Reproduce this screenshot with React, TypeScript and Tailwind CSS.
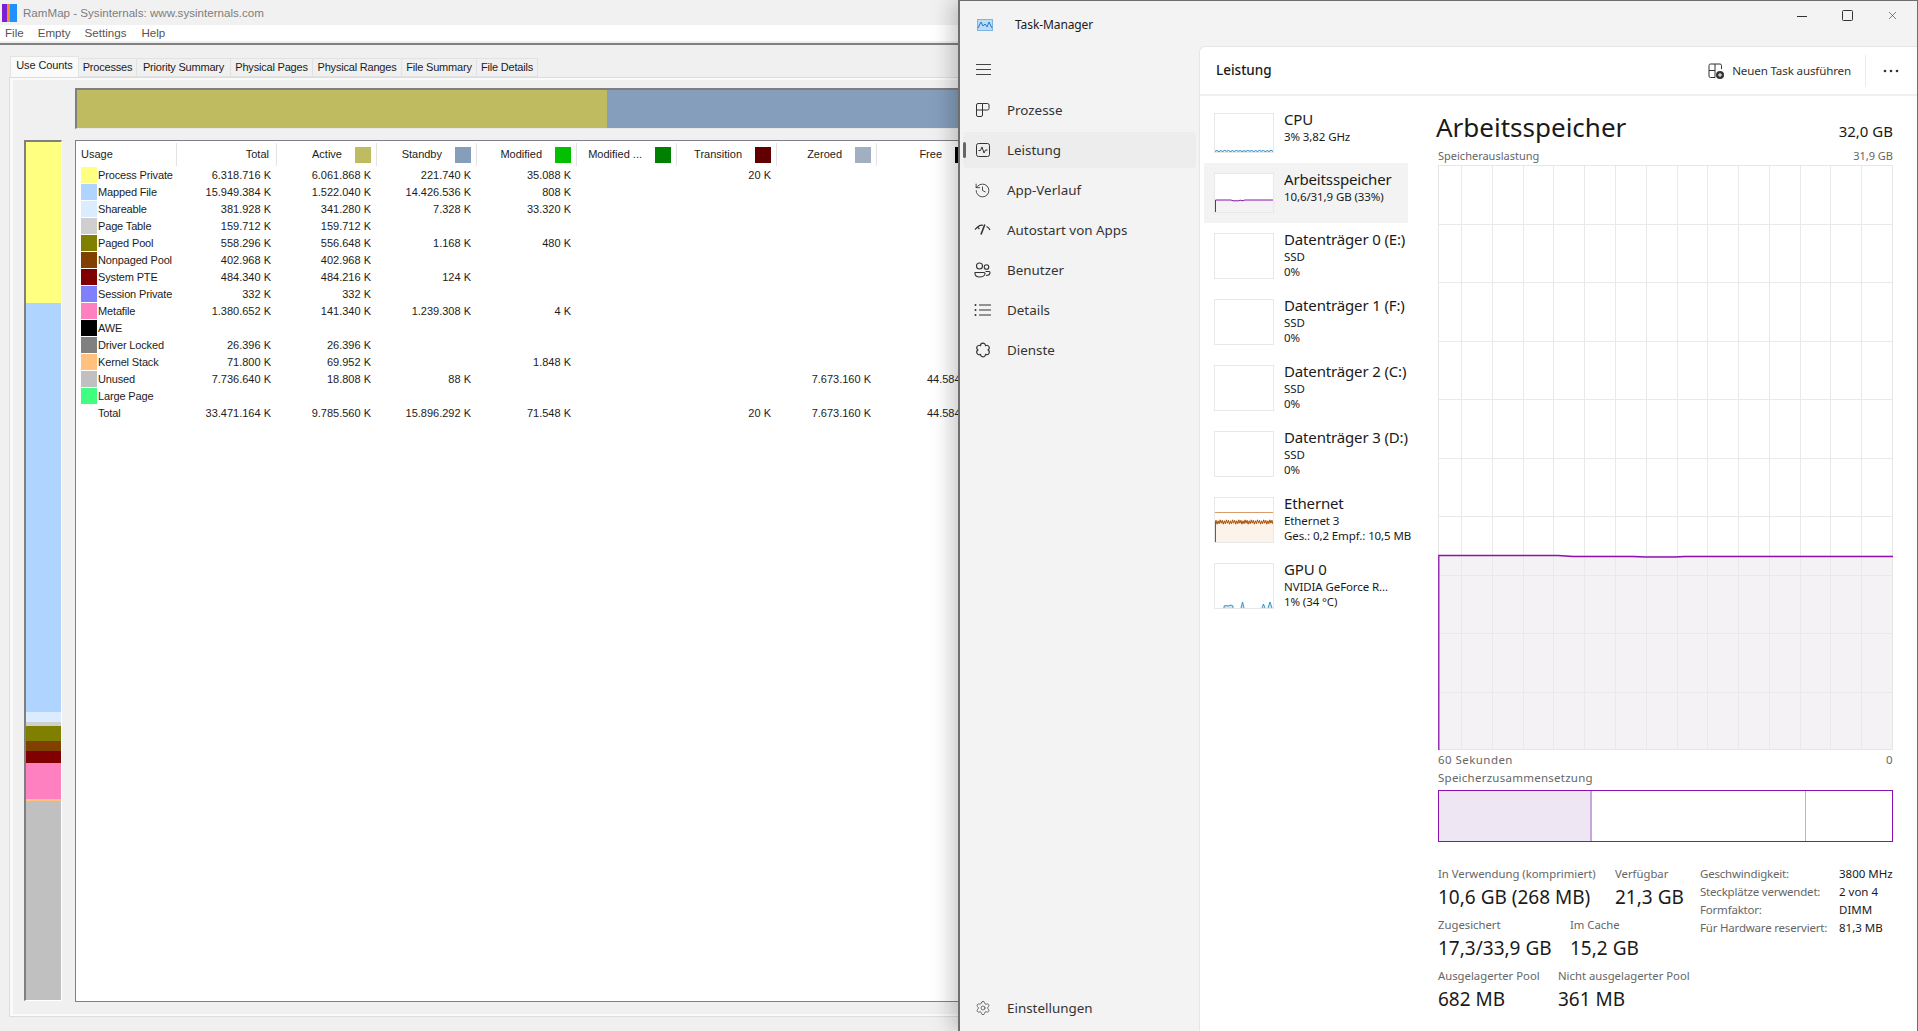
import React from "react";
import { History, Settings, X } from "lucide-react";

const rows: [string, string, string[]][] = [
  ["#ffff80", "Process Private", ["6.318.716 K", "6.061.868 K", "221.740 K", "35.088 K", "", "20 K", "", ""]],
  ["#afd4ff", "Mapped File", ["15.949.384 K", "1.522.040 K", "14.426.536 K", "808 K", "", "", "", ""]],
  ["#dcecff", "Shareable", ["381.928 K", "341.280 K", "7.328 K", "33.320 K", "", "", "", ""]],
  ["#cfcfcf", "Page Table", ["159.712 K", "159.712 K", "", "", "", "", "", ""]],
  ["#808000", "Paged Pool", ["558.296 K", "556.648 K", "1.168 K", "480 K", "", "", "", ""]],
  ["#804000", "Nonpaged Pool", ["402.968 K", "402.968 K", "", "", "", "", "", ""]],
  ["#800000", "System PTE", ["484.340 K", "484.216 K", "124 K", "", "", "", "", ""]],
  ["#8080ff", "Session Private", ["332 K", "332 K", "", "", "", "", "", ""]],
  ["#ff80c0", "Metafile", ["1.380.652 K", "141.340 K", "1.239.308 K", "4 K", "", "", "", ""]],
  ["#000000", "AWE", ["", "", "", "", "", "", "", ""]],
  ["#808080", "Driver Locked", ["26.396 K", "26.396 K", "", "", "", "", "", ""]],
  ["#ffc080", "Kernel Stack", ["71.800 K", "69.952 K", "", "1.848 K", "", "", "", ""]],
  ["#c0c0c0", "Unused", ["7.736.640 K", "18.808 K", "88 K", "", "", "", "7.673.160 K", "44.584 K"]],
  ["#40ff80", "Large Page", ["", "", "", "", "", "", "", ""]],
  ["transparent", "Total", ["33.471.164 K", "9.785.560 K", "15.896.292 K", "71.548 K", "", "20 K", "7.673.160 K", "44.584 K"]],
];

const headers: [string, string | null][] = [
  ["Total", null],
  ["Active", "#bebb60"],
  ["Standby", "#849ebc"],
  ["Modified", "#00c000"],
  ["Modified ...", "#008000"],
  ["Transition", "#600000"],
  ["Zeroed", "#a0b0c0"],
  ["Free", "#000000"],
];

const tabs: [string, string][] = [
  ["Processes", "w-[58px]"],
  ["Priority Summary", "w-[94px]"],
  ["Physical Pages", "w-[82px]"],
  ["Physical Ranges", "w-[89px]"],
  ["File Summary", "w-[75px]"],
  ["File Details", "w-[61px]"],
];

const barSegments: [string, string][] = [
  ["h-[161px]", "bg-[#ffff80]"],
  ["h-[409px]", "bg-[#afd4ff]"],
  ["h-[10px]", "bg-[#dcecff]"],
  ["h-[4px]", "bg-[#cfcfcf]"],
  ["h-[15px]", "bg-[#808000]"],
  ["h-[10px]", "bg-[#804000]"],
  ["h-[12px]", "bg-[#800000]"],
  ["h-[36px]", "bg-[#ff80c0]"],
  ["h-[2px]", "bg-[#ffc080]"],
  ["flex-1", "bg-[#c0c0c0]"],
];

function RamMap() {
  return (
    <div className="w-[958px] h-[1031px] shrink-0 overflow-hidden bg-[#f0f0f0] font-['Liberation_Sans',sans-serif] text-[11px] text-[#1c1c1c]">
      <div className="h-[25px] flex items-center pl-[2px] bg-[#f1f1f1]">
        <svg width="15" height="18" viewBox="0 0 15 18">
          <rect width="5" height="18" fill="#7a1fd6" />
          <rect x="5" width="3" height="18" fill="#ff8a1a" />
          <rect x="8" width="7" height="18" fill="#1e90ff" />
        </svg>
        <span className="ml-[6px] text-[11.6px] text-[#7d7d7d]">RamMap - Sysinternals: www.sysinternals.com</span>
      </div>
      <div className="h-[16px] bg-white flex items-center pl-[5px] text-[11.6px] text-[#555] gap-[14px]">
        <span>File</span>
        <span>Empty</span>
        <span>Settings</span>
        <span className="ml-[1px]">Help</span>
      </div>
      <div className="mt-[2px] h-[2px] bg-[#808080]" />
      <div className="pl-[9px] pt-[11px]">
        <div className="flex items-end h-[21px] pl-[1px]">
          <div className="w-[69px] h-[21px] bg-[#fafafa] border border-b-0 border-[#e4e4e4] flex items-center justify-center pb-[3px] tracking-[-0.1px]">Use Counts</div>
          {tabs.map(([t, w]) => (
            <div key={t} className={`${w} h-[19px] border border-l-0 border-[#e2e2e2] flex items-center justify-center tracking-[-0.2px]`}>{t}</div>
          ))}
        </div>
        <div className="w-[1200px] h-[940px] border border-[#dddddd] bg-[#f0f0f0] pt-[10px] pl-[14px] shadow-[inset_3px_0_0_#fafafa,inset_0_-2px_0_#fafafa,inset_0_2px_0_#fafafa]">
          <div className="ml-[51px] h-[41px] border-t-2 border-l-2 border-[#7f7f7f] border-b border-b-[#e8e8e8] flex">
            <div className="w-[530px] bg-[#bebb60]" />
            <div className="flex-1 bg-[#849ebc]" />
          </div>
          <div className="flex mt-[11px] h-[862px]">
            <div className="w-[38px] h-[861px] shrink-0 border-t-2 border-l-2 border-[#7f7f7f] border-r border-b border-r-white border-b-white flex flex-col">
              {barSegments.map(([h, c], i) => (
                <div key={i} className={`${h} ${c}`} />
              ))}
            </div>
            <div className="ml-[13px] flex-1 bg-white border border-[#7f7f87]">
              <div className="flex h-[26px] pt-[2px]">
                <div className="w-[101px] border-r border-[#e4e4e4] pl-[5px] flex items-center h-[23px]">Usage</div>
                {headers.map(([h, c]) => (
                  <div key={h} className="w-[100px] h-[23px] border-r border-[#e4e4e4] flex items-center justify-end pr-[5px] gap-[13px]">
                    <span className={c ? "" : "pr-[2px]"}>{h}</span>
                    {c && <span className="w-[16px] h-[16px]" style={{ backgroundColor: c }} />}
                  </div>
                ))}
              </div>
              {rows.map(([c, name, vals]) => (
                <div key={name} className="flex h-[17px] items-start">
                  <div className="w-[101px] flex items-center pl-[5px] gap-[1px] h-[16px]">
                    <span className="w-[16px] h-[16px] shrink-0" style={{ backgroundColor: c }} />
                    <span className="whitespace-nowrap pt-[1px] tracking-[-0.15px]">{name}</span>
                  </div>
                  {vals.map((v, i) => (
                    <div key={i} className="w-[100px] h-[16px] text-right pr-[6px] leading-[17px] whitespace-nowrap">{v}</div>
                  ))}
                </div>
              ))}
            </div>
          </div>
        </div>
      </div>
    </div>
  );
}

const S = "#333333";
const ProzesseIcon = () => (
  <svg width="16" height="16" viewBox="0 0 16 16" fill="none" stroke={S}>
    <path d="M7.5 1.5H3A1.5 1.5 0 0 0 1.5 3v10A1.5 1.5 0 0 0 3 14.500h3A1.500 1.500 0 0 0 7.500 13V1.500h5A1.500 1.500 0 0 1 14 3v3.500a1.500 1.500 0 0 1-1.500 1.500h-11" />
  </svg>
);
const LeistungIcon = () => (
  <svg width="16" height="16" viewBox="0 0 16 16" fill="none" stroke={S}>
    <rect x="1.500" y="1.500" width="13" height="13" rx="2" />
    <path d="M3.500 8.500h2l1.500-3.500 2 6 1.500-3h2" />
  </svg>
);
const AutostartIcon = () => (
  <svg width="17" height="16" viewBox="0 0 17 16" fill="none" stroke={S} strokeWidth="1.150">
    <path d="M1 7.500 3.500 5l2 2M3.500 5A6.500 6.500 0 0 1 9 3.200M12.500 4.500a6.500 6.500 0 0 1 3.500 3.500" />
    <path d="M7 12.500 10.800 2.500" strokeWidth="1.600" />
  </svg>
);
const BenutzerIcon = () => (
  <svg width="17" height="16" viewBox="0 0 17 16" fill="none" stroke={S} strokeWidth="1.100">
    <circle cx="5.500" cy="4" r="3" />
    <circle cx="12.500" cy="5" r="2.300" />
    <path d="M1 10.500h9a1 1 0 0 1 1 1c0 2-2.500 3.500-5.500 3.500S1 13.500 1 11.500z" />
    <path d="M11.500 9.500h3.500a1 1 0 0 1 1 1c0 1.500-1.500 3-4 3" />
  </svg>
);
const DetailsIcon = () => (
  <svg width="17" height="16" viewBox="0 0 17 16" fill={S}>
    <circle cx="1.500" cy="3" r="1" />
    <circle cx="1.500" cy="8" r="1" />
    <circle cx="1.500" cy="13" r="1" />
    <path d="M5 2.500h12v1H5zM5 7.500h12v1H5zM5 12.500h12v1H5z" />
  </svg>
);
const DiensteIcon = () => (
  <svg width="16" height="16" viewBox="0 0 16 16" fill="none" stroke={S} strokeWidth="1.100">
    <path d="M13 8A2.500 2.500 0 0 1 10.500 12.330 2.500 2.500 0 0 1 5.500 12.330 2.500 2.500 0 0 1 3 8 2.500 2.500 0 0 1 5.500 3.670 2.500 2.500 0 0 1 10.500 3.670 2.500 2.500 0 0 1 13 8Z" strokeLinejoin="round" />
  </svg>
);
const MenuIcon = () => (
  <svg width="15" height="11" viewBox="0 0 15 11" fill="none" stroke="#444">
    <path d="M0 .5H15M0 5.500H15M0 10.500H15" />
  </svg>
);

const nav: [React.ReactNode, string, boolean][] = [
  [<ProzesseIcon />, "Prozesse", false],
  [<LeistungIcon />, "Leistung", true],
  [<History size={17} strokeWidth={1.200} color={S} />, "App-Verlauf", false],
  [<AutostartIcon />, "Autostart von Apps", false],
  [<BenutzerIcon />, "Benutzer", false],
  [<DetailsIcon />, "Details", false],
  [<DiensteIcon />, "Dienste", false],
];

function Thumb({ h, children }: { h: string; children?: React.ReactNode }) {
  return <div className={`w-[60px] ${h} shrink-0 border border-[#e8e8e8] overflow-hidden bg-white`}>{children}</div>;
}

function noise(n: number, base: number, amp: number) {
  let s = "";
  for (let i = 0; i <= n; i++) {
    s += `${i * (58 / n)},${base + (i % 2 === 0 ? amp : -amp) * (1 + ((i * 7) % 3) * 0.4)} `;
  }
  return s;
}

const CpuChart = () => (
  <svg width="58" height="38" viewBox="0 0 58 38">
    <polyline points={noise(30, 37, 0.300)} fill="none" stroke="#117dbb" />
  </svg>
);
const RamChart = () => (
  <svg width="58" height="38" viewBox="0 0 58 38">
    <path d="M0 26H58V38H0Z" fill="#f4f2f5" />
    <path d="M.5 38V26H16l2 .800h6l1-.800 2 .800 3-.800h28" fill="none" stroke="#8b12ae" />
  </svg>
);
const EthChart = () => (
  <svg width="58" height="44" viewBox="0 0 58 44">
    <path d="M0 24H58V44H0Z" fill="#fcf3eb" />
    <path d="M0 14.500H58" stroke="#d99c6f" />
    <polyline points={noise(56, 24, 1.200)} fill="none" stroke="#a74f01" strokeWidth="1" />
    <path d="M.5 24V44" stroke="#a74f01" />
  </svg>
);
const GpuChart = () => (
  <svg width="58" height="44" viewBox="0 0 58 44">
    <path d="M9 44V42l2-.500 2 .500 3-1 2 1V44M26 44 27.500 38 29 44M47 44 48.500 40 50 44M53 44 55 38 57 44" fill="#cfe5f3" stroke="#117dbb" strokeWidth="0.800" />
  </svg>
);

const perf: { t: string; s: string[]; thumb: string; chart?: React.ReactNode; active?: boolean; h: string }[] = [
  { t: "CPU", s: ["3%  3,82 GHz"], thumb: "h-[40px]", chart: <CpuChart />, h: "h-[60px]" },
  { t: "Arbeitsspeicher", s: ["10,6/31,9 GB (33%)"], thumb: "h-[40px]", chart: <RamChart />, active: true, h: "h-[60px]" },
  { t: "Datenträger 0 (E:)", s: ["SSD", "0%"], thumb: "h-[46px]", h: "h-[66px]" },
  { t: "Datenträger 1 (F:)", s: ["SSD", "0%"], thumb: "h-[46px]", h: "h-[66px]" },
  { t: "Datenträger 2 (C:)", s: ["SSD", "0%"], thumb: "h-[46px]", h: "h-[66px]" },
  { t: "Datenträger 3 (D:)", s: ["SSD", "0%"], thumb: "h-[46px]", h: "h-[66px]" },
  { t: "Ethernet", s: ["Ethernet 3", "Ges.: 0,2 Empf.: 10,5 MBit/s"], thumb: "h-[46px]", chart: <EthChart />, h: "h-[66px]" },
  { t: "GPU 0", s: ["NVIDIA GeForce R...", "1% (34 °C)"], thumb: "h-[46px]", chart: <GpuChart />, h: "h-[66px]" },
];

const vLines = [23, 54, 85, 115, 146, 177, 208, 239, 269, 300, 331, 362, 392, 423];

function MainChart() {
  return (
    <svg width="455" height="585" viewBox="0 0 455 585" className="block">
      <path d="M0 390H455V585H0Z" fill="#f4f2f5" />
      {vLines.map((x) => (
        <path key={x} d={`M${x + 0.5} 0V585`} stroke="#e9e9e9" />
      ))}
      {[58.500, 117, 175.500, 234, 292.500, 351, 409.500, 468, 526.500].map((y) => (
        <path key={y} d={`M0 ${Math.round(y) + 0.5}H455`} stroke="#e9e9e9" />
      ))}
      <rect x="0.500" y="0.500" width="454" height="584" fill="none" stroke="#e6e6e6" />
      <path d="M.8 585V390.500H120l15 1h60l12 .5h30l10-.5H455" fill="none" stroke="#8b12ae" strokeWidth="1.300" />
    </svg>
  );
}

function Stat({ label, value, w }: { label: string; value: string; w: string }) {
  return (
    <div className={w}>
      <div className="text-[11.3px] leading-[18px] text-[#666] whitespace-nowrap">{label}</div>
      <div className="text-[19px] leading-[28px] text-[#1a1a1a] whitespace-nowrap">{value}</div>
    </div>
  );
}

function TaskManager() {
  return (
    <div className="relative flex-1 h-[1031px] flex flex-col overflow-hidden bg-[#f3f3f3] border-l-2 border-t border-r border-[#6e6e6e] shadow-[-6px_0_20px_rgba(0,0,0,0.22)] font-['Noto_Sans',sans-serif] text-[#1a1a1a]">
      <div className="h-[45px] shrink-0 flex items-center pt-[3px]">
        <svg width="16" height="12" viewBox="0 0 16 12" className="ml-[17px]">
          <rect x="0.500" y="0.500" width="15" height="11" fill="#bcdcf5" stroke="#7db5e4" />
          <path d="M1 9 4 3 6 7 8 5l2 3 2-5 3 6" fill="none" stroke="#1f7ad1" />
        </svg>
        <span className="ml-[22px] text-[12px] tracking-[-0.1px]">Task-Manager</span>
        <div className="ml-auto self-start mt-[5px] flex items-center gap-[35px] pr-[18px]">
          <svg width="10" height="10" viewBox="0 0 10 10"><path d="M0 5.500H10" stroke="#333" /></svg>
          <svg width="11" height="11" viewBox="0 0 11 11" className="-mr-[2px]"><rect x="0.500" y="0.500" width="10" height="10" rx="1" fill="none" stroke="#333" /></svg>
          <X size={13} strokeWidth={1.100} color="#333" />
        </div>
      </div>
      <div className="flex-1 flex min-h-0">
        <div className="w-[239px] shrink-0 flex flex-col pl-[3px] pr-[3px]">
          <div className="h-[37px] flex items-center pl-[13px] mt-[5px]">
            <MenuIcon />
          </div>
          <div className="flex flex-col gap-[4px] mt-[4px]">
            {nav.map(([icon, label, active]) => (
              <div key={label} className={`relative h-[36px] flex items-center pl-[11px] rounded-[4px] ${active ? "bg-[#ededed]" : ""}`}>
                {active && <span className="absolute left-0 top-[10px] w-[3px] h-[16px] rounded-full bg-[#666]" />}
                <span className="w-[17px] flex justify-center">{icon}</span>
                <span className="ml-[16px] text-[13.400px] text-[#333] whitespace-nowrap">{label}</span>
              </div>
            ))}
          </div>
          <div className="mt-auto mb-[5px] h-[36px] flex items-center pl-[12px]">
            <Settings size={16} strokeWidth={1} color={S} />
            <span className="ml-[16px] text-[13.400px] text-[#333]">Einstellungen</span>
          </div>
        </div>
        <div className="flex-1 bg-white rounded-tl-[6px] border-l border-t border-[#e6e6e6] flex flex-col min-w-0">
          <div className="h-[49px] shrink-0 border-b-2 border-[#f0f0f0] flex items-center pl-[16px] pr-[18px]">
            <span className="text-[13.500px] font-medium">Leistung</span>
            <svg width="16" height="16" viewBox="0 0 16 16" className="ml-auto" fill="none" stroke={S}>
              <path d="M7 1H2.500A1.500 1.500 0 0 0 1 2.500V13a1.500 1.500 0 0 0 1.500 1.500H7V1h5a1.500 1.500 0 0 1 1.500 1.500V6M1 7.500h6" />
              <circle cx="12" cy="12" r="4" fill="#333" stroke="none" />
              <path d="M10 12h4M12 10v4" stroke="#fff" />
            </svg>
            <span className="ml-[8px] text-[11.600px] text-[#333] tracking-[-0.15px]">Neuen Task ausführen</span>
            <span className="ml-[14px] w-px h-[32px] bg-[#ececec]" />
            <svg width="16" height="4" viewBox="0 0 16 4" className="ml-[17px]" fill="#333">
              <circle cx="2" cy="2" r="1.300" />
              <circle cx="8" cy="2" r="1.300" />
              <circle cx="14" cy="2" r="1.300" />
            </svg>
          </div>
          <div className="flex-1 flex min-h-0">
            <div className="w-[238px] shrink-0 pt-[7px] pl-[4px]">
              {perf.map((p) => (
                <div key={p.t} className={`w-[204px] ${p.h} flex pl-[10px] pt-[10px] ${p.active ? "bg-[#f3f3f3]" : ""}`}>
                  <Thumb h={p.thumb}>{p.chart}</Thumb>
                  <div className="ml-[10px] w-[127px] shrink-0 -mt-[4px] overflow-hidden whitespace-nowrap">
                    <div className="text-[15px] leading-[20px] tracking-[-0.15px]">{p.t}</div>
                    {p.s.map((x, i) => (
                      <div key={i} className="text-[11.500px] leading-[15px] tracking-[-0.1px]">{x}</div>
                    ))}
                  </div>
                </div>
              ))}
            </div>
            <div className="w-[455px] shrink-0 flex flex-col">
              <div className="flex justify-between items-center h-[36px] mt-[13px]">
                <span className="text-[26px] leading-[36px] -ml-[2px]">Arbeitsspeicher</span>
                <span className="text-[15px] mt-[9px]">32,0 GB</span>
              </div>
              <div className="flex justify-between items-center h-[16px] mt-[3px] mb-[1px] text-[11px] text-[#666]">
                <span>Speicherauslastung</span>
                <span>31,9 GB</span>
              </div>
              <MainChart />
              <div className="flex justify-between items-center h-[20px] text-[11.500px] tracking-[0.45px] text-[#666]">
                <span>60 Sekunden</span>
                <span>0</span>
              </div>
              <div className="h-[18px] leading-[18px] text-[11.500px] tracking-[0.25px] text-[#666] mt-[-1px]">Speicherzusammensetzung</div>
              <div className="h-[52px] mt-[3px] border border-[#8b12ae] flex">
                <div className="w-[153px] bg-[#eee6f3] border-r-2 border-[#c9a5d8]" />
                <div className="w-[214px] border-r border-[#c9a5d8]" />
              </div>
              <div className="flex mt-[23px]">
                <div className="w-[262px] flex flex-col gap-[5px]">
                  <div className="flex">
                    <Stat w="w-[177px]" label="In Verwendung (komprimiert)" value="10,6 GB (268 MB)" />
                    <Stat w="" label="Verfügbar" value="21,3 GB" />
                  </div>
                  <div className="flex">
                    <Stat w="w-[132px]" label="Zugesichert" value="17,3/33,9 GB" />
                    <Stat w="" label="Im Cache" value="15,2 GB" />
                  </div>
                  <div className="flex">
                    <Stat w="w-[120px]" label="Ausgelagerter Pool" value="682 MB" />
                    <Stat w="" label="Nicht ausgelagerter Pool" value="361 MB" />
                  </div>
                </div>
                <div className="grid grid-cols-[139px_1fr] text-[11.500px] leading-[18px] whitespace-nowrap content-start">
                  <span className="text-[#666] tracking-[-0.2px]">Geschwindigkeit:</span><span>3800 MHz</span>
                  <span className="text-[#666] tracking-[-0.2px]">Steckplätze verwendet:</span><span>2 von 4</span>
                  <span className="text-[#666] tracking-[-0.2px]">Formfaktor:</span><span>DIMM</span>
                  <span className="text-[#666] tracking-[-0.2px]">Für Hardware reserviert:</span><span>81,3 MB</span>
                </div>
              </div>
            </div>
          </div>
        </div>
      </div>
    </div>
  );
}

export default function App() {
  return (
    <div className="w-[1918px] h-[1031px] flex overflow-hidden">
      <RamMap />
      <TaskManager />
    </div>
  );
}
